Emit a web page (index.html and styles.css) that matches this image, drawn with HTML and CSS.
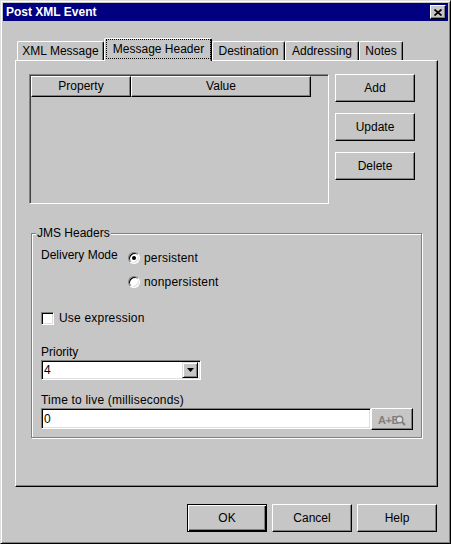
FILE: index.html
```html
<!DOCTYPE html>
<html lang="en">
<head>
  <meta charset="UTF-8" />
  <title>Post XML Event</title>
  <link rel="stylesheet" href="styles.css">
</head>
<body>
  <div class="window">
    <div class="titlebar">
      <span class="title">Post XML Event</span>
      <span class="close-btn">
        <svg width="8" height="7" viewBox="0 0 8 7"><path d="M0.5 0.5l7 6M7.5 0.5l-7 6" stroke="#000" stroke-width="1.7" fill="none"/></svg>
      </span>
    </div>

    <div class="dialog">
      <div class="tabs">
        <div class="tab tab-xml">XML Message</div>
        <div class="tab tab-active tab-header"><span class="focus">Message Header</span></div>
        <div class="tab tab-dest">Destination</div>
        <div class="tab tab-addr">Addressing</div>
        <div class="tab tab-notes">Notes</div>
      </div>

      <div class="panel">
        <div class="props">
          <div class="table">
            <div class="table-head">
              <div class="col col-prop">Property</div>
              <div class="col col-value">Value</div>
            </div>
          </div>
          <div class="side-buttons">
            <button class="btn">Add</button>
            <button class="btn">Update</button>
            <button class="btn">Delete</button>
          </div>
        </div>

        <fieldset class="group">
          <legend>JMS Headers</legend>
          <div class="delivery">
            <div class="delivery-label">Delivery Mode</div>
            <div class="options">
              <label class="option"><span class="radio checked"></span>persistent</label>
              <label class="option"><span class="radio"></span>nonpersistent</label>
            </div>
          </div>
          <label class="check-row"><span class="checkbox"></span>Use expression</label>

          <div class="field-label label-priority">Priority</div>
          <div class="combo">
            <span class="combo-value">4</span>
            <span class="combo-arrow">
              <svg width="7" height="4" viewBox="0 0 7 4"><path d="M0 0h7L3.5 4z" fill="#000"/></svg>
            </span>
          </div>

          <div class="field-label label-ttl">Time to live (milliseconds)</div>
          <div class="ttl-row">
            <div class="textbox">0</div>
            <button class="btn btn-expr">
              <span class="expr-text">A+B</span>
              <svg class="expr-glass" width="11" height="11" viewBox="0 0 11 11"><circle cx="4.5" cy="4.5" r="3.3" fill="#dcdcdc" stroke="#808080" stroke-width="1.4"/><path d="M7 7l3 3" stroke="#808080" stroke-width="2"/></svg>
            </button>
          </div>
        </fieldset>
      </div>

      <div class="footer">
        <button class="btn btn-default">OK</button>
        <button class="btn">Cancel</button>
        <button class="btn">Help</button>
      </div>
    </div>
  </div>
</body>
</html>
```

FILE: styles.css
```css
* { box-sizing: border-box; }

body {
  margin: 0;
  font-family: 'Liberation Sans', Arial, sans-serif;
  font-size: 12px;
  line-height: 14px;
  color: #000;
}

.window {
  width: 451px;
  height: 544px;
  padding: 2px;
  background: #c6c6c6;
  border: 1px solid;
  border-color: #dfdfdf #000 #000 #dfdfdf;
  box-shadow: inset 1px 1px #fff, inset -1px -1px #808080;
}

/* barra de titulo */
.titlebar {
  height: 18px;
  background: #000080;
  display: flex;
  align-items: center;
  justify-content: space-between;
  padding: 0 2px 0 3px;
}

.title {
  color: #fff;
  font-weight: bold;
  font-size: 12px;
}

.close-btn {
  width: 16px;
  height: 14px;
  background: #c6c6c6;
  border: 1px solid;
  border-color: #fff #000 #000 #fff;
  box-shadow: inset -1px -1px #808080;
  display: flex;
  align-items: center;
  justify-content: center;
}

.dialog {
  padding: 17px 10px 0 12px;
}

/* abas */
.tabs {
  display: flex;
  align-items: flex-end;
  height: 23px;
  margin-left: 2px;
  margin-bottom: -1px;
  position: relative;
  z-index: 1;
}

.tab {
  height: 19px;
  margin-bottom: 1px;
  padding-top: 2px;
  text-align: center;
  background: #c6c6c6;
  border-top: 1px solid #fff;
  border-left: 1px solid #fff;
  border-right: 1px solid #000;
  border-radius: 2px 2px 0 0;
  box-shadow: inset -1px 0 #808080;
  white-space: nowrap;
}

.tab-xml { width: 87px; }
.tab-header { width: 108px; }
.tab-dest { width: 73px; }
.tab-addr { width: 74px; }
.tab-notes { width: 44px; }

.tab-active {
  height: 23px;
  margin-bottom: 0;
  padding-top: 0;
}

.focus {
  display: block;
  height: 20px;
  margin: 0 0 0 1px;
  padding-top: 2px;
  border: 1px dotted #000;
}

/* painel */
.panel {
  width: 423px;
  height: 427px;
  padding: 13px 0 0 13px;
  border: 1px solid;
  border-color: #fff #000 #000 #fff;
  box-shadow: inset -1px -1px #808080;
}

.props {
  display: flex;
  align-items: flex-start;
}

.table {
  width: 300px;
  height: 130px;
  padding: 1px 0 0 1px;
  border: 1px solid;
  border-color: #808080 #fff #fff #808080;
  box-shadow: inset 1px 1px #404040;
}

.table-head {
  display: flex;
  height: 21px;
}

.col {
  text-align: center;
  line-height: 19px;
  border: 1px solid;
  border-color: #fff #000 #000 #fff;
  box-shadow: inset -1px -1px #808080;
}

.col-prop { width: 100px; }
.col-value { width: 180px; }

.side-buttons {
  display: flex;
  flex-direction: column;
  gap: 11px;
  margin-left: 6px;
}

.btn {
  width: 80px;
  height: 28px;
  padding: 0;
  font: 12px 'Liberation Sans', Arial, sans-serif;
  color: #000;
  background: #c6c6c6;
  border: 1px solid;
  border-color: #fff #000 #000 #fff;
  box-shadow: inset -1px -1px #808080;
}

.btn-default {
  border-color: #000;
  box-shadow: inset 1px 1px #fff, inset -1px -1px #000, inset -2px -2px #808080;
}

/* grupo JMS */
.group {
  width: 391px;
  margin: 22px 0 0 2px;
  padding: 6px 7px 7px 9px;
  border: 1px solid #808080;
  box-shadow: inset 1px 1px #fff, 1px 1px #fff;
}

.group legend {
  padding: 0 1px;
  margin-left: -5px;
  background: #c6c6c6;
}

.delivery {
  display: flex;
  align-items: flex-start;
}

.delivery-label {
  width: 87px;
  margin-top: 2px;
}

.option,
.check-row {
  display: flex;
  align-items: center;
  height: 24px;
  letter-spacing: 0.2px;
}

.radio {
  position: relative;
  flex: none;
  width: 12px;
  height: 12px;
  margin-right: 4px;
  border-radius: 50%;
  background: #fff;
  border: 1px solid;
  border-color: #808080 #fff #fff #808080;
  box-shadow: inset 1px 1px #000, inset -1px -1px #dfdfdf;
}

.radio.checked::after {
  content: "";
  position: absolute;
  left: 3px;
  top: 3px;
  width: 4px;
  height: 4px;
  border-radius: 50%;
  background: #000;
}

.check-row {
  margin-top: 12px;
}

.checkbox {
  flex: none;
  width: 13px;
  height: 13px;
  margin-right: 5px;
  background: #fff;
  border: 1px solid;
  border-color: #808080 #fff #fff #808080;
  box-shadow: inset 1px 1px #000, inset -1px -1px #dfdfdf;
}

.label-priority { margin-top: 15px; }
.label-ttl { margin-top: 13px; letter-spacing: 0.2px; }

.combo {
  display: flex;
  align-items: center;
  width: 160px;
  height: 20px;
  margin-top: 1px;
  padding: 2px;
  background: #fff;
  border: 1px solid;
  border-color: #808080 #fff #fff #808080;
  box-shadow: inset 1px 1px #000, inset -1px -1px #dfdfdf;
}

.combo-value {
  flex: 1;
}

.combo-arrow {
  display: flex;
  align-items: center;
  justify-content: center;
  width: 16px;
  height: 16px;
  background: #c6c6c6;
  border: 1px solid;
  border-color: #dfdfdf #000 #000 #dfdfdf;
  box-shadow: inset 1px 1px #fff, inset -1px -1px #808080;
}

.ttl-row {
  display: flex;
  align-items: flex-start;
  margin-top: 1px;
}

.textbox {
  width: 330px;
  height: 21px;
  padding: 2px 2px 0 2px;
  line-height: 16px;
  background: #fff;
  border: 1px solid;
  border-color: #808080 #fff #fff #808080;
  box-shadow: inset 1px 1px #000, inset -1px -1px #dfdfdf;
}

.btn-expr {
  width: 42px;
  height: 22px;
  display: flex;
  align-items: center;
  justify-content: center;
  padding-top: 1px;
}

.expr-text {
  font-size: 11px;
  font-weight: bold;
  color: #808080;
  letter-spacing: -0.5px;
}

.expr-glass {
  margin-left: -4px;
  margin-top: 2px;
}

.footer {
  display: flex;
  justify-content: flex-end;
  gap: 5px;
  width: 422px;
  margin-top: 17px;
}
```
